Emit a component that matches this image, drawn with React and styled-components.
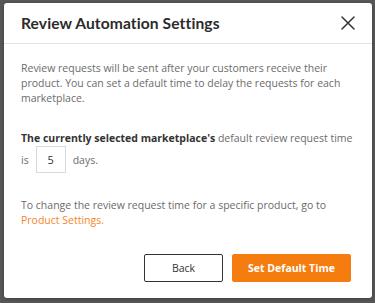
import React from "react";
import styled, { createGlobalStyle } from "styled-components";

const Global = createGlobalStyle`
  html, body { margin: 0; padding: 0; }
  body {
    background: #585858;
    font-family: "Open Sans", "Noto Sans", Arial, sans-serif;
    width: 375px;
    height: 303px;
    overflow: hidden;
  }
`;

const Backdrop = styled.div`
  width: 375px;
  height: 303px;
  box-sizing: border-box;
  padding: 3px 3px 5px 4px;
  background: #585858;
`;

const Modal = styled.div`
  background: #fff;
  height: 100%;
  border-radius: 3px;
  display: flex;
  flex-direction: column;
  box-shadow: 0 1px 4px rgba(0,0,0,0.3);
`;

const Header = styled.div`
  height: 41px;
  box-sizing: border-box;
  display: flex;
  align-items: center;
  justify-content: space-between;
  padding: 0 16px 0 17px;
  border-bottom: 1px solid #dfe5ea;
`;

const Title = styled.h2`
  margin: 0;
  font-family: Lato, "Open Sans", sans-serif;
  font-size: 15.6px;
  font-weight: 700;
  color: #2b2b2b;
  letter-spacing: 0.1px;
`;

const Close = styled.button`
  border: 0;
  background: none;
  padding: 0;
  width: 16px;
  height: 16px;
  display: flex;
  cursor: pointer;
`;

const Body = styled.div`
  flex: 1;
  padding: 17px 12px 0 17px;
  display: flex;
  flex-direction: column;
`;

const Para = styled.p`
  margin: ${p => p.$mt || 0}px 0 ${p => p.$mb || 0}px 0;
  font-size: 10.5px;
  line-height: 15px;
  color: #6b6b6b;
`;

const Strong = styled.b`
  font-weight: 700;
  color: #333;
`;

const InlineRow = styled.div`
  display: flex;
  align-items: center;
  gap: 7px;
  font-size: 10.5px;
  color: #6b6b6b;
`;

const DaysInput = styled.div`
  width: 30px;
  height: 27px;
  box-sizing: border-box;
  border: 1px solid #d5dbe0;
  display: flex;
  align-items: center;
  justify-content: center;
  font-size: 11px;
  color: #333;
`;

const Link = styled.a`
  color: #f5861f;
  text-decoration: none;
`;

const Footer = styled.div`
  margin-top: auto;
  display: flex;
  justify-content: flex-end;
  gap: 9px;
  padding: 0 21px 16px 0;
`;

const Button = styled.button`
  height: 28px;
  box-sizing: border-box;
  font-family: inherit;
  font-size: 10.5px;
  border-radius: 2px;
  cursor: pointer;
  width: ${p => p.$w}px;
  ${p => p.$primary ? `
    background: #f57c0e;
    border: 1px solid #f57c0e;
    color: #fff;
    font-weight: 700;
  ` : `
    background: #fff;
    border: 1px solid #333;
    color: #333;
    font-weight: 400;
  `}
`;

export default function App() {
  return (
    <>
      <Global />
      <Backdrop>
        <Modal>
          <Header>
            <Title>Review Automation Settings</Title>
            <Close aria-label="Close">
              <svg width="16" height="16" viewBox="0 0 16 16">
                <path d="M2 2 L14 14 M14 2 L2 14" stroke="#333" strokeWidth="1.5" strokeLinecap="round" />
              </svg>
            </Close>
          </Header>
          <Body>
            <Para $mb={25}>
              Review requests will be sent after your customers receive their<br />product. You can set a default time to delay the requests for each<br />marketplace.
            </Para>
            <Para>
              <Strong>The currently selected marketplace's</Strong> default review request time
            </Para>
            <InlineRow>
              <span>is</span>
              <DaysInput>5</DaysInput>
              <span>days.</span>
            </InlineRow>
            <Para $mt={25}>
              To change the review request time for a specific product, go to<br /><Link href="#">Product Settings.</Link>
            </Para>
          </Body>
          <Footer>
            <Button $w={79}>Back</Button>
            <Button $primary $w={119}>Set Default Time</Button>
          </Footer>
        </Modal>
      </Backdrop>
    </>
  );
}
